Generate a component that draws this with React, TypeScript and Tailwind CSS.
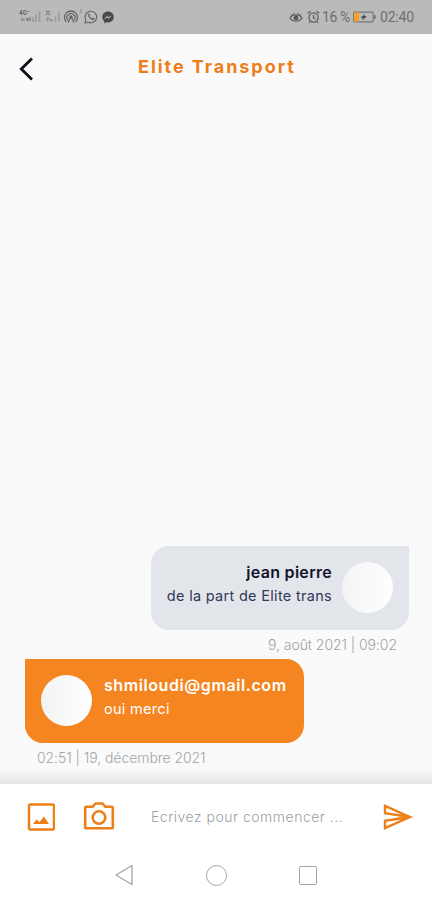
import type { ReactNode } from "react";

type Message = {
  id: number;
  author: string;
  text: string;
  date: string;
  mine: boolean;
};

const messages: Message[] = [
  { id: 1, author: "jean pierre", text: "de la part de Elite trans", date: "9, août 2021 | 09:02", mine: true },
  { id: 2, author: "shmiloudi@gmail.com", text: "oui merci", date: "02:51 | 19, décembre 2021", mine: false },
];

const Signal = ({ label }: { label: string }) => (
  <svg viewBox="0 0 23 14" className="h-[14px] w-[23px]">
    <text x="0" y="5" fontSize="5.5" fontWeight="700" fill="#606060">{label}</text>
    <path d="M3 8v3M5 9v2M7 8l2 3M9 8v3M11 7v4" stroke="#727272" strokeWidth="1.1" />
    <path d="M14 7v5M17 4.500v7.500M20.500 1.500v10.500" stroke="#9c9c9c" strokeWidth="1.700" />
  </svg>
);

const StatusBar = () => (
  <div className="flex h-[34px] shrink-0 items-center bg-[#bababa] pl-[19px] pr-[18px] text-[#666]">
    <Signal label="4G⁺" />
    <svg viewBox="0 0 17 14" className="ml-[3px] h-[14px] w-[17px]">
      <path d="M1 1l4 4M5 1l-4 4M3 7v2M5 9v2M1 10h2" stroke="#777" strokeWidth="1.200" />
      <path d="M7 9v3M10.500 6v6M14 1.500v10.500" stroke="#9c9c9c" strokeWidth="1.600" />
    </svg>
    <svg viewBox="0 0 16 16" className="ml-px h-4 w-4" fill="none" stroke="currentColor" strokeWidth="1.300">
      <path d="M3.300 13A6.500 6.500 0 1 1 12.700 13M5 11.300a4 4 0 1 1 6 0" />
      <path d="M8 7.500l-3 6M8 7.500l3 6" />
      <circle cx="8" cy="8" r="1" fill="currentColor" />
    </svg>
    <svg viewBox="0 0 4 16" className="h-4 w-1">
      <path d="M2 0v4" stroke="#888" />
    </svg>
    <svg viewBox="0 0 14 14" className="ml-px h-[14px] w-[14px]" fill="none" stroke="currentColor" strokeWidth="1.100">
      <path d="M1 13l.8-3.100A5.800 5.800 0 1 1 4 12.100z" />
      <path d="M4.500 4c.7-.7 1.300.4 1.500 1l-.6 1c.6 1.200 1.300 1.900 2.600 2.500l1-.7 1.600.8c-.4 2.100-3 1.400-4.700-.2C4.500 7 3.600 5 4.500 4z" fill="currentColor" strokeWidth=".3" />
    </svg>
    <svg viewBox="0 0 12 13" className="ml-[4px] h-[13px] w-3">
      <path d="M6 .5C2.700.5.3 2.800.3 6c0 1.800.8 3.300 2 4.200v2.200l2-1.100c4 .9 7.400-1.600 7.400-5.300C11.700 2.800 9.300.5 6 .5z" fill="#484848" />
      <path d="M2.600 7.700l2.700-2.600 1.500 1.400 2.600-1.500-2.700 2.600-1.500-1.300z" fill="#bababa" stroke="#bababa" strokeWidth=".5" />
    </svg>
    <div className="ml-auto flex items-center">
      <svg viewBox="0 0 15 13" className="h-[12px] w-[14px]" fill="none" stroke="#555" strokeWidth="1.200">
        <path d="M1 7.500C3.500 3.300 11.500 3.300 14 7.500 11.500 12 3.500 12 1 7.500zM2.200 3.700l1.500 1.200M5 2l.7 1.700M10 2l-.7 1.700M12.800 3.700l-1.500 1.200" />
        <circle cx="7.500" cy="7.500" r="2" fill="#555" />
      </svg>
      <svg viewBox="0 0 13 14" className="ml-[4px] h-[14px] w-[13px]" fill="none" stroke="#5c5c5c" strokeWidth="1.200">
        <circle cx="6.500" cy="7.500" r="4.600" />
        <path d="M.8 3.300l2.700-2M12.200 3.300l-2.700-2M6.500 5v3l2 1M3 11.500l-1 1.500M10 11.500l1 1.500" />
      </svg>
      <span className="ml-[2px] w-[28px] whitespace-nowrap font-[Roboto] text-[14px] leading-none tracking-[-0.400px] text-[#6e6e6e]">16 %</span>
      <svg viewBox="0 0 23 12" className="ml-[3px] h-3 w-[23px]">
        <rect x=".6" y="1.100" width="19.500" height="9.800" rx="1" fill="none" stroke="#747474" strokeWidth="1.100" />
        <path d="M1 1.500h5v9H1z" fill="#f8a127" />
        <path d="M7.500 6.800l4.300-3.500-.5 2h2.600L9.300 9.200l.7-2.400z" fill="#444" />
        <path d="M21.800 4v4" stroke="#666" strokeWidth="1.400" />
      </svg>
      <span className="ml-[4px] w-[34px] whitespace-nowrap font-[Roboto] text-[14px] leading-none tracking-[-0.200px] text-[#6e6e6e]">02:40</span>
    </div>
  </div>
);

const Header = () => (
  <header className="flex h-[66px] shrink-0 items-center pl-[19px]">
    <button aria-label="Retour">
      <svg viewBox="0 0 16 24" className="mt-[3px] h-6 w-4" fill="none" stroke="#0d0d17" strokeWidth="2.800">
        <path d="M13 1.500L2.300 12 13 22.500" />
      </svg>
    </button>
    <h1 className="ml-[103px] whitespace-nowrap text-[18px] font-bold leading-none tracking-[1.950px] text-[#ec7f1b]">
      Elite Transport
    </h1>
  </header>
);

const Bubble = ({ message }: { message: Message }) => {
  const { author, text, date, mine } = message;
  return (
    <div className={mine ? "flex flex-col items-end" : "flex flex-col items-start"}>
      <div
        className={
          mine
            ? "flex h-[84px] w-[258px] flex-row-reverse rounded-[18px] rounded-tr-none bg-[#e2e6ea] px-4 pt-4 text-right"
            : "flex h-[84px] w-[279px] rounded-[18px] rounded-tl-none bg-[#f58520] px-4 pt-4"
        }
      >
        <div className="h-[51px] w-[51px] shrink-0 rounded-full bg-linear-to-r from-[#f3f3f3] to-white" />
        <div className={mine ? "mr-[10px] text-[#33375a]" : "ml-3 text-white"}>
          <p className={mine
            ? "whitespace-nowrap text-[16px] font-semibold leading-5 tracking-[0.300px] text-[#11132b]"
            : "whitespace-nowrap text-[16px] font-semibold leading-5 tracking-[0.580px]"}>
            {author}
          </p>
          <p className="mt-1 whitespace-nowrap text-[14.500px] leading-5 tracking-[0.300px]">{text}</p>
        </div>
      </div>
      <time
        className={
          mine
            ? "mr-3 mt-[5px] whitespace-nowrap text-[14px] font-light leading-5 tracking-[-0.060px] text-[#a2a2a2]"
            : "ml-3 mt-[5px] whitespace-nowrap text-[14px] font-light leading-5 tracking-[-0.060px] text-[#a2a5a8]"
        }
      >
        {date}
      </time>
    </div>
  );
};

const IconButton = ({ label, children }: { label: string; children: ReactNode }) => (
  <button aria-label={label} className="shrink-0 text-[#ee7f18]">{children}</button>
);

const Composer = () => (
  <div className="flex h-[66px] shrink-0 items-center bg-white pl-[27px] pr-[17px]">
    <IconButton label="Image">
      <svg viewBox="0 0 28 28" className="h-7 w-7">
        <rect x="2" y="1.500" width="25" height="25" rx="1.500" fill="none" stroke="currentColor" strokeWidth="2.500" />
        <path d="M6 21l3.500-4.500 3 2.500 4.500-5.500 5 7.500z" fill="currentColor" />
      </svg>
    </IconButton>
    <div className="ml-[28px] flex">
      <IconButton label="Photo">
        <svg viewBox="0 0 32 28" className="-mt-[3px] h-7 w-8" fill="none" stroke="currentColor" strokeWidth="2.600">
          <path d="M3.500 4.800h6l3-3.300h7l3 3.300h6q1.300 0 1.300 1.300v18.900q0 1.300-1.300 1.300h-25q-1.300 0-1.300-1.300V6.100q0-1.300 1.300-1.300z" strokeLinejoin="round" />
          <circle cx="16" cy="15.500" r="6.300" />
        </svg>
      </IconButton>
    </div>
    <span className="ml-[36px] whitespace-nowrap text-[14px] font-light leading-5 tracking-[0.500px] text-[#9b9fa3]">
      Ecrivez pour commencer ...
    </span>
    <div className="ml-auto flex">
      <IconButton label="Envoyer">
        <svg viewBox="0 0 32 28" className="h-7 w-8" fill="none" stroke="currentColor" strokeWidth="2.400">
          <path d="M2 2.800v7.500L27 14zM2 25.200v-7.500L27 14z" strokeMiterlimit="6" />
          <path d="M24 12.300l7 1.700-7 1.700z" fill="currentColor" stroke="none" />
        </svg>
      </IconButton>
    </div>
  </div>
);

const NavBar = () => (
  <nav className="flex h-[50px] shrink-0 items-center bg-white pl-[114px] text-[#a4a4a4]">
    <svg viewBox="0 0 20 22" className="h-[22px] w-5" fill="none" stroke="currentColor" strokeWidth="1.300">
      <path d="M18 1.500v19L2 11z" strokeLinejoin="round" />
    </svg>
    <span className="ml-[72px] h-[21px] w-[21px] rounded-full border border-current" />
    <span className="ml-[72px] h-[19px] w-[18px] rounded-[2px] border border-current" />
  </nav>
);

const App = () => (
  <div className="flex h-[900px] w-[432px] flex-col overflow-hidden bg-[#fafafa] font-[Inter,sans-serif]">
    <StatusBar />
    <Header />
    <main className="flex flex-1 flex-col justify-end gap-[4px] pl-[25px] pr-[23px]">
      {messages.map((message) => (
        <Bubble key={message.id} message={message} />
      ))}
    </main>
    <div className="h-4 shrink-0 bg-linear-to-b from-[#fafafa] to-[#e6e6e8]" />
    <Composer />
    <NavBar />
  </div>
);

export default App;
